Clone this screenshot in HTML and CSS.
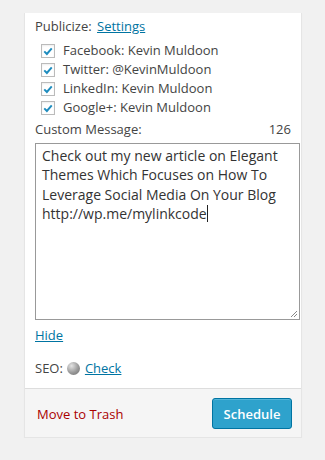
FILE: index.html
```html
<!DOCTYPE html>
<html lang="en">
<head>
    <meta charset="UTF-8">
    <title>Publish</title>
    <link rel="stylesheet" href="styles.css">
</head>
<body>

<div class="box">
    <div class="inside">
        <div class="publicize">
            <span>Publicize:</span> <a href="#">Settings</a>
        </div>
        <ul class="services">
            <li><span class="check"><svg viewBox="0 0 16 16" width="12" height="12"><path d="M3 8.5 L6.5 12 L13 4.5" fill="none" stroke="#1e8cbe" stroke-width="2.6"/></svg></span>Facebook: Kevin Muldoon</li>
            <li><span class="check"><svg viewBox="0 0 16 16" width="12" height="12"><path d="M3 8.5 L6.5 12 L13 4.5" fill="none" stroke="#1e8cbe" stroke-width="2.6"/></svg></span>Twitter: @KevinMuldoon</li>
            <li><span class="check"><svg viewBox="0 0 16 16" width="12" height="12"><path d="M3 8.5 L6.5 12 L13 4.5" fill="none" stroke="#1e8cbe" stroke-width="2.6"/></svg></span>LinkedIn: Kevin Muldoon</li>
            <li><span class="check"><svg viewBox="0 0 16 16" width="12" height="12"><path d="M3 8.5 L6.5 12 L13 4.5" fill="none" stroke="#1e8cbe" stroke-width="2.6"/></svg></span>Google+: Kevin Muldoon</li>
        </ul>
        <div class="message-head">
            <span>Custom Message:</span>
            <span>126</span>
        </div>
        <div class="message">Check out my new article on Elegant Themes Which Focuses on How To Leverage Social Media On Your Blog http://wp.me/mylinkcode<span class="caret"></span>
            <svg class="grip" viewBox="0 0 8 8" width="8" height="8"><path d="M7 1 L1 7 M7 4 L4 7" stroke="#888" stroke-width="1"/></svg>
        </div>
        <a class="hide" href="#">Hide</a>
        <div class="seo">
            <span>SEO:</span>
            <span class="dot"></span>
            <a href="#">Check</a>
        </div>
    </div>
    <div class="actions">
        <a class="trash" href="#">Move to Trash</a>
        <button class="schedule">Schedule</button>
    </div>
</div>

</body>
</html>
```

FILE: styles.css
```css
body {
    margin: 0;
    background-color: #f1f1f1;
    font-family: 'Open Sans', sans-serif;
    font-size: 13px;
    color: #444;
}
.box {
    width: 276px;
    margin: 13px 0 0 24px;
    background-color: #fff;
    border: 1px solid #e5e5e5;
    border-top: none;
    box-shadow: 0 1px 1px rgba(0, 0, 0, 0.04);
}
.inside {
    padding: 2px 2px 10px 10px;
}
a {
    color: #0074a2;
}
.publicize {
    line-height: 22px;
}
.publicize span {
    margin-right: 2px;
}
.services {
    list-style: none;
    margin: 4px 0 0 0;
    padding: 0 0 0 6px;
}
.services li {
    display: flex;
    align-items: center;
    line-height: 19px;
    height: 19px;
}
.check {
    width: 14px;
    height: 14px;
    border: 1px solid #bbb;
    box-sizing: border-box;
    background: #fff;
    display: flex;
    align-items: center;
    justify-content: center;
    margin-right: 8px;
    box-shadow: inset 0 1px 2px rgba(0, 0, 0, 0.07);
}
.message-head {
    display: flex;
    justify-content: space-between;
    padding-right: 8px;
    margin-top: 2px;
    line-height: 20px;
}
.message {
    position: relative;
    box-sizing: border-box;
    width: 265px;
    height: 177px;
    margin-top: 4px;
    border: 1px solid #999;
    padding: 2px 6px;
    font-size: 14px;
    line-height: 19.4px;
    color: #333;
}
.caret {
    display: inline-block;
    width: 1px;
    height: 17px;
    background: #222;
    vertical-align: -3px;
}
.grip {
    position: absolute;
    right: 1px;
    bottom: 1px;
}
.hide {
    display: inline-block;
    margin-top: 5px;
    line-height: 20px;
}
.seo {
    display: flex;
    align-items: center;
    margin-top: 13px;
    line-height: 20px;
}
.dot {
    width: 13px;
    height: 13px;
    border-radius: 50%;
    background: radial-gradient(circle at 35% 30%, #e4e4e4, #999 55%, #6a6a6a);
    margin: 0 5px 0 4px;
}
.actions {
    display: flex;
    justify-content: space-between;
    align-items: center;
    background-color: #f5f5f5;
    border-top: 1px solid #ddd;
    padding: 9px 9px 8px 12px;
}
.trash {
    color: #a00;
    text-decoration: none;
}
.schedule {
    font-family: 'Open Sans', sans-serif;
    font-size: 13px;
    font-weight: 600;
    color: #fff;
    background-color: #2ea2cc;
    border: 1px solid #0074a2;
    border-radius: 3px;
    box-shadow: inset 0 1px 0 rgba(120, 200, 230, 0.5);
    width: 80px;
    height: 31px;
    padding: 0;
}
```
